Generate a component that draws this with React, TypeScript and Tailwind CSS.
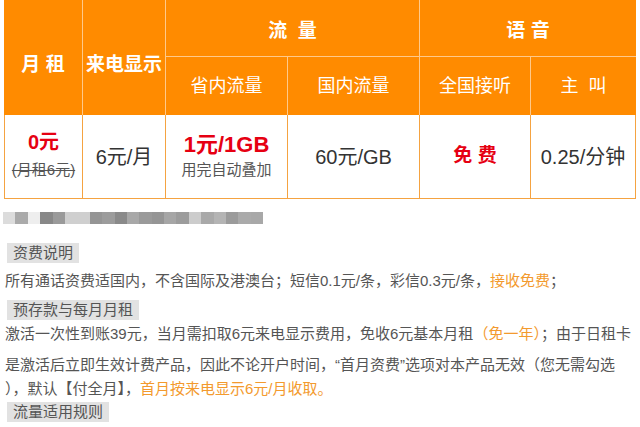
import React from "react";

const blurBlocks = [
  "#dcdcdc", "#aaaaaa", "#eeeeee", "#888888", "#9a9a9a", "#cfcfcf", "#cfcfcf",
  "#959595", "#9c9c9c", "#8a8a8a", "#a8a8a8", "#9a9a9a", "#959595", "#a6a6a6",
  "#9c9c9c", "#cccccc", "#a9a9a9", "#b4b4b4", "#9b9b9b", "#aaaaaa", "#a8a8a8",
];

const App: React.FC = () => {
  const hd = "border-r border-[#ffc98a] flex items-center justify-center text-white";
  const td = "border-r border-b border-[#f5a341] flex flex-col items-center justify-center bg-white";

  return (
    <div
      className="w-[640px] h-[427px] overflow-hidden bg-white"
      style={{ fontFamily: '"Liberation Sans", "Noto Sans CJK SC", sans-serif' }}
    >
      {/* 资费表 */}
      <div className="ml-[4px] w-[632px] grid grid-cols-[79px_83px_122px_132px_111px_105px] grid-rows-[57px_58px_84px] bg-[#ff8b00]">
        <div className={`${hd} row-span-2 text-[19px] font-bold pt-[16px]`}>月&nbsp;租</div>
        <div className={`${hd} row-span-2 text-[19px] font-bold pt-[16px]`}>来电显示</div>
        <div className={`${hd} col-span-2 border-b text-[19px] font-bold pt-[6px]`}>流&nbsp;&nbsp;量</div>
        <div className={`${hd} col-span-2 border-b border-r-0 text-[19px] font-bold pt-[6px]`}>语&nbsp;音</div>
        <div className={`${hd} text-[18px]`}>省内流量</div>
        <div className={`${hd} text-[18px]`}>国内流量</div>
        <div className={`${hd} text-[18px]`}>全国接听</div>
        <div className={`${hd} border-r-0 text-[18px]`}>主&nbsp;&nbsp;叫</div>

        <div className={`${td} border-l`}>
          <div className="text-[20px] font-bold text-[#e60012] leading-[24px] mt-[-2px]">0元</div>
          <div className="text-[15px] text-[#555] line-through leading-[22px] mt-[5px]">(月租6元)</div>
        </div>
        <div className={`${td} text-[20px] text-[#333]`}>6元/月</div>
        <div className={td}>
          <div className="text-[22px] font-bold text-[#e60012] leading-[24px]">1元/1GB</div>
          <div className="text-[15px] text-[#555] leading-[20px] mt-[3px]">用完自动叠加</div>
        </div>
        <div className={`${td} text-[20px] text-[#333]`}>60元/GB</div>
        <div className={`${td} text-[19px] font-bold text-[#e60012]`}>免&nbsp;费</div>
        <div className={`${td} text-[20px] text-[#333]`}>0.25/分钟</div>
      </div>

      {/* 模糊行 */}
      <div className="mt-[13px] ml-[3px] h-[12px] flex">
        {blurBlocks.map((c, i) => (
          <div key={i} className="w-[12.4px] h-full" style={{ backgroundColor: c }} />
        ))}
      </div>

      {/* 说明 */}
      <div className="mt-[19px] ml-[7px] w-fit h-[20px] px-[6px] bg-[#e2e2e2] text-[15px] leading-[20px] text-[#555]">
        资费说明
      </div>
      <div className="h-[37px] pl-[5px] flex items-center text-[15px] text-[#555] whitespace-nowrap">
        所有通话资费适国内，不含国际及港澳台；短信0.1元/条，彩信0.3元/条，
        <span className="text-[#f39a2e]">接收免费</span>；
      </div>
      <div className="ml-[7px] w-fit h-[20px] px-[6px] bg-[#e2e2e2] text-[15px] leading-[20px] text-[#555]">
        预存款与每月月租
      </div>
      <div className="pl-[5px] text-[15px] text-[#555] whitespace-nowrap">
        <div className="h-[28px] leading-[28px]">
          激活一次性到账39元，当月需扣取6元来电显示费用，免收6元基本月租<span className="text-[#f39a2e]">（免一年）</span>；由于日租卡
        </div>
        <div className="mt-[5px] h-[24px] leading-[24px]">
          是激活后立即生效计费产品，因此不论开户时间，“首月资费”选项对本产品无效（您无需勾选
        </div>
        <div className="h-[24px] leading-[24px]">
          ），默认【付全月】，<span className="text-[#f39a2e]">首月按来电显示6元/月收取。</span>
        </div>
      </div>
      <div className="mt-[1px] ml-[7px] w-fit h-[20px] px-[6px] bg-[#e2e2e2] text-[15px] leading-[20px] text-[#555]">
        流量适用规则
      </div>
    </div>
  );
};

export default App;
